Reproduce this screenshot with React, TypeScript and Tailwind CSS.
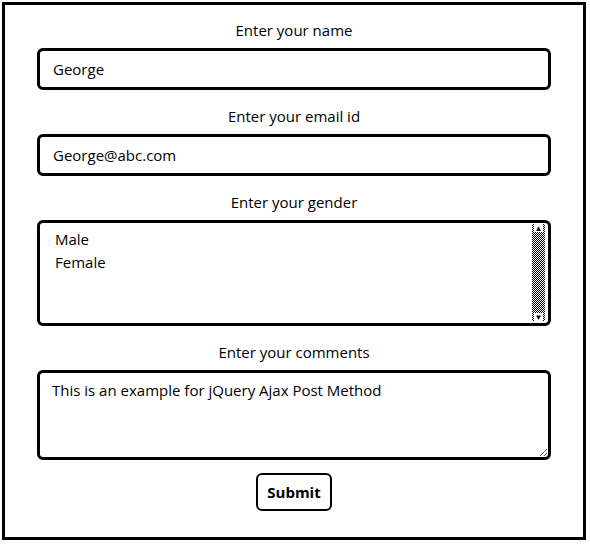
import React from 'react';

const font = { fontFamily: '"Open Sans", "Noto Sans", sans-serif' };

const Label: React.FC<{ text: string }> = ({ text }) => (
  <div className="h-5 leading-5 text-center text-[15px] text-black mb-2">{text}</div>
);

const GenderList: React.FC = () => (
  <div className="relative h-[106px] border-[3px] border-black rounded-md bg-white pl-[15px] pt-[5px] text-[15px] text-black">
    <div className="leading-[23px]">Male</div>
    <div className="leading-[23px]">Female</div>
    {/* scrollbar */}
    <div className="absolute right-[3px] top-[1px] bottom-[2px] w-[13px] flex flex-col items-center justify-between bg-[repeating-conic-gradient(#000_0_25%,#fff_0_50%)] bg-[length:2px_2px]">
      <span className="bg-white text-[8px] leading-[8px] px-[1px]">▲</span>
      <span className="bg-white text-[8px] leading-[8px] px-[1px]">▼</span>
    </div>
  </div>
);

export default function App() {
  return (
    <div className="w-[590px] h-[546px] bg-white pt-[2px] pl-[2px]" style={font}>
      <div className="w-[584px] h-[538px] border-[3px] border-black px-[32px] pt-[15px]">
        <Label text="Enter your name" />
        <input
          defaultValue="George"
          className="w-full h-[42px] border-[3px] border-black rounded-md px-[13px] text-[15px] text-black outline-none"
          style={font}
        />

        <div className="mt-4">
          <Label text="Enter your email id" />
          <input
            defaultValue="George@abc.com"
            className="w-full h-[42px] border-[3px] border-black rounded-md px-[13px] text-[15px] text-black outline-none"
            style={font}
          />
        </div>

        <div className="mt-4">
          <Label text="Enter your gender" />
          <GenderList />
        </div>

        <div className="mt-4">
          <Label text="Enter your comments" />
          <textarea
            defaultValue="This is an example for jQuery Ajax Post Method"
            className="block w-full h-[90px] border-[3px] border-black rounded-md px-[12px] pt-[6px] text-[15px] leading-[22px] text-black outline-none"
            style={font}
          />
        </div>

        <div className="flex justify-center mt-[13px]">
          <button
            className="w-[76px] h-[38px] border-2 border-black rounded-md bg-white text-[15px] font-bold text-black"
            style={font}
          >
            Submit
          </button>
        </div>
      </div>
    </div>
  );
}
